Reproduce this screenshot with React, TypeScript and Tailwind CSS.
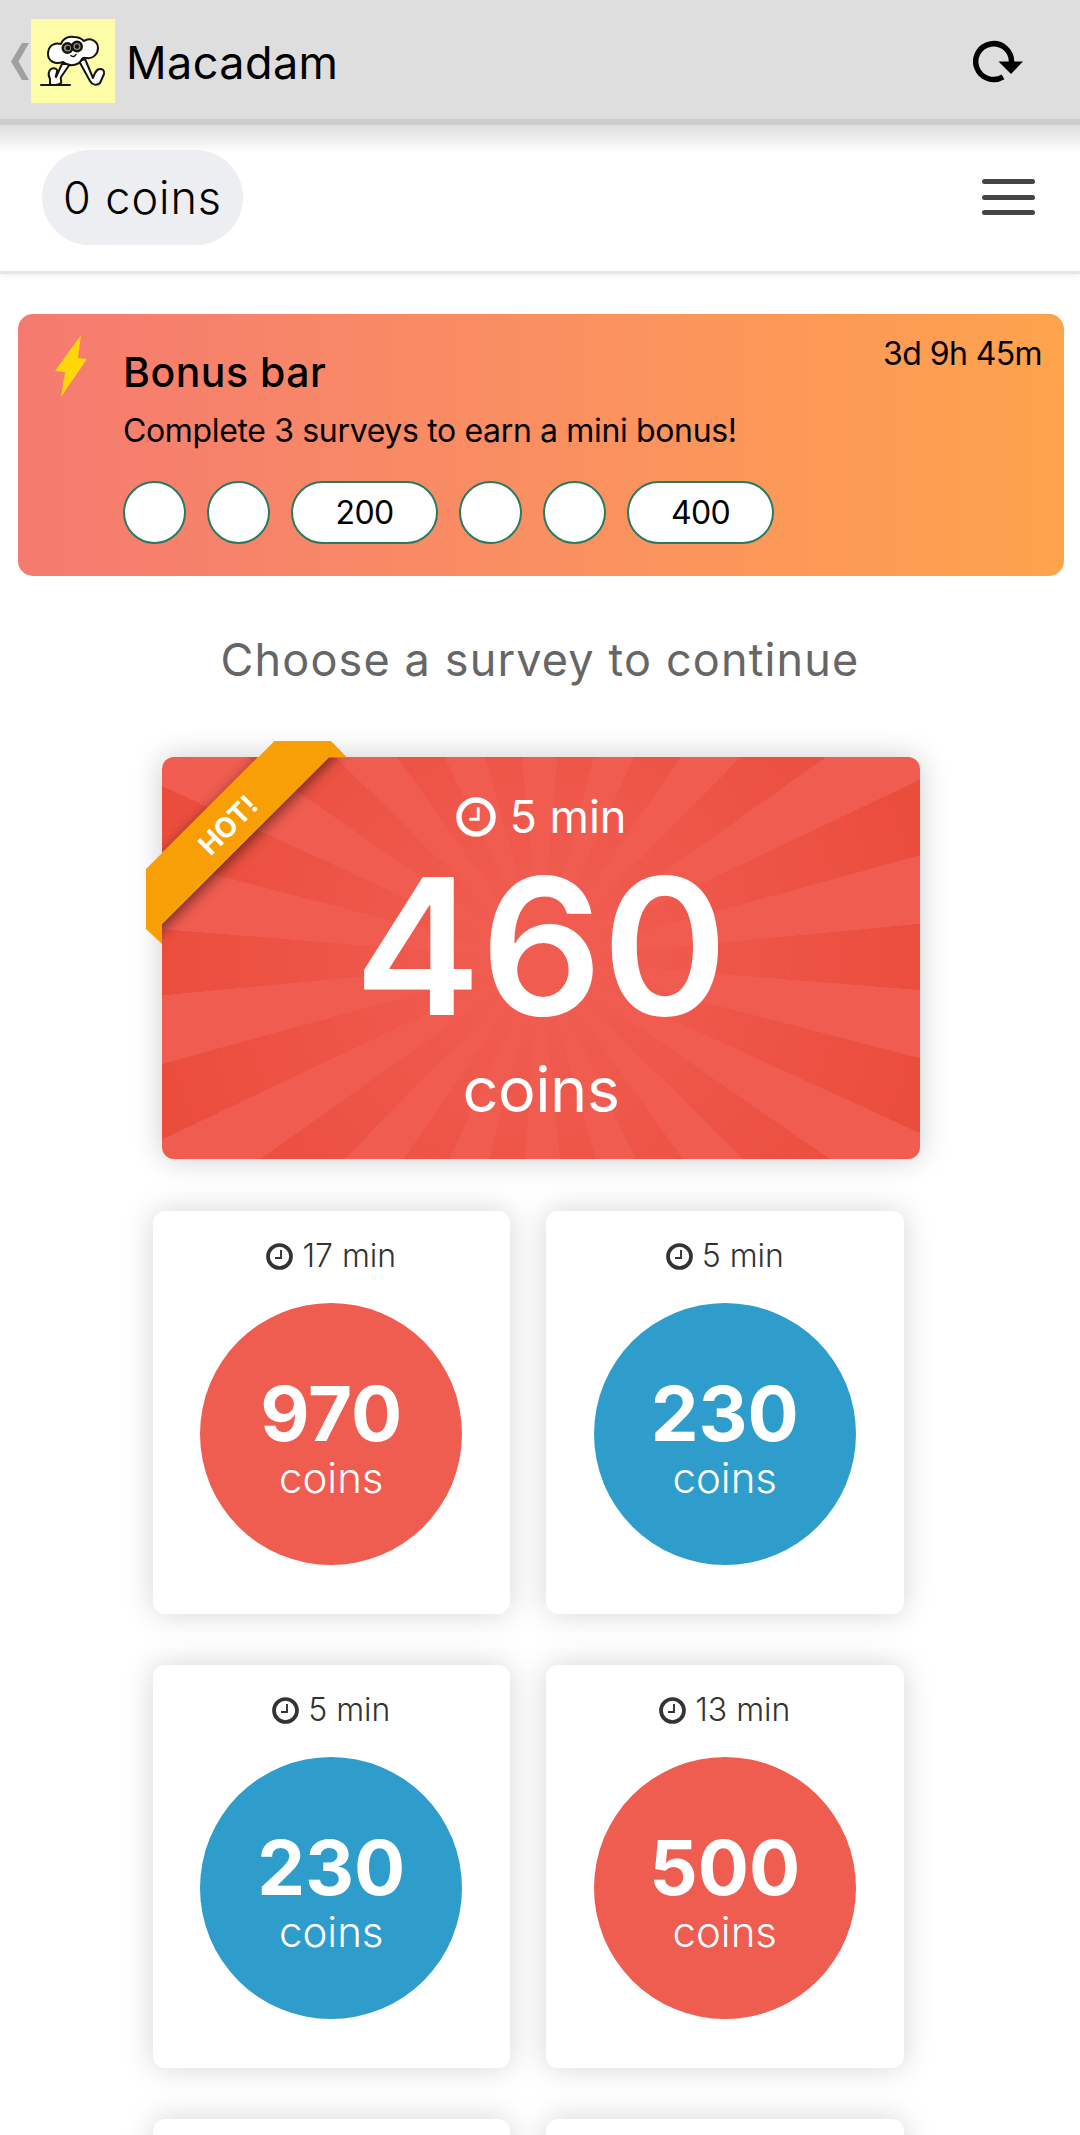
const steps = ["", "", "200", "", "", "400"];

const surveys = [
    { minutes: 17, coins: 970, color: "bg-[#ef5c50]" },
    { minutes: 5, coins: 230, color: "bg-[#2e9dcc]" },
    { minutes: 5, coins: 230, color: "bg-[#2e9dcc]" },
    { minutes: 13, coins: 500, color: "bg-[#ef5c50]" },
];

function ClockIcon({ className }: { className: string }) {
    return (
        <svg viewBox="0 0 27 27" fill="none" stroke="currentColor" className={className}>
            <circle cx="13.5" cy="13.5" r="11.5" strokeWidth="3.7" />
            <path d="M15 7v8H9" strokeWidth="1.9" />
        </svg>
    );
}

function Logo() {
    return (
        <svg viewBox="0 0 84 84" className="size-[84px]" stroke="#15150c" strokeWidth="2" strokeLinecap="round" strokeLinejoin="round">
            <rect width="84" height="84" fill="#fdfda8" stroke="none" />
            {/* legs */}
            <path d="M31 45 25 58c-1-2 2-5 1-7-2-3-7-2-8 2-1 3 0 5 1 7v5c3 2 8 1 11-1 1-2-1-4 0-6l9-13z" fill="#fff" />
            <path d="M10 66h29" fill="none" />
            <path d="M48 42 59 62c2 4 7 5 10 2l4-9c1-4-2-5-4-5-4 0-5 4-7 9L54 40z" fill="#fff" />
            {/* cloud body */}
            <path d="M30 25c2-6 8-8 13-7 5 0 8 2 10 4 6-4 14 0 14 7 0 6-5 11-11 10-2 0-4-1-5 1-3 7-13 8-19 3-8 3-15-1-15-8 0-8 6-12 13-10z" fill="#fff" />
            <circle cx="36.500" cy="29" r="4.800" fill="#888" strokeWidth="2.400" />
            <circle cx="46" cy="27.500" r="4.800" fill="#888" strokeWidth="2.400" />
            <circle cx="37" cy="29" r="1.2" fill="#15150c" />
            <circle cx="46" cy="27.500" r="1.2" fill="#15150c" />
            <path d="M40 36.500c2 2 4 1 5-1" fill="none" strokeWidth="1.5" />
        </svg>
    );
}

function SurveyCard({ minutes, coins, color }: { minutes: number; coins: number; color: string }) {
    return (
        <div className="h-[402.5px] rounded-xl bg-white pt-[28px] shadow-[0_0_30px_rgba(0,0,0,0.17)]">
            <div className="flex h-[34px] items-center justify-center gap-[9px] text-[#333]">
                <ClockIcon className="size-[27px]" />
                <span className="text-[32px] leading-none font-light">{minutes} min</span>
            </div>
            <div className={`mx-auto mt-[30px] flex size-[262px] flex-col items-center rounded-full pt-[72px] text-white ${color}`}>
                <span className="text-[76px] leading-none font-bold">{coins}</span>
                <span className="mt-[6px] text-[42px] leading-none font-light">coins</span>
            </div>
        </div>
    );
}

export default function App() {
    return (
        <div className="h-[2135px] w-[1080px] overflow-hidden bg-white font-['Inter',sans-serif] text-black">
            {/* App bar */}
            <header className="relative flex h-[125px] items-center border-b-[6px] border-[#cdcdcd] bg-[#dedede] pt-[3px] pl-[11px]">
                <svg viewBox="0 0 18 37" className="h-[37px] w-[18px]" fill="#a0a0a0">
                    <path d="M11 0h7L7.500 18.500 18 37h-7L0 18.500z" />
                </svg>
                <div className="ml-[2px]">
                    <Logo />
                </div>
                <h1 className="mt-[3px] ml-[11px] text-[45px] leading-none tracking-[0.4px]">Macadam</h1>
                <svg viewBox="0 0 50 43" className="mr-[57px] ml-auto h-[43px] w-[50px]">
                    <path d="M38.500 22A17.900 17.900 0 1 0 30 36.800" fill="none" stroke="#000" strokeWidth="5.500" />
                    <path d="M25.500 21.500H50L38 34z" />
                </svg>
                <div className="absolute top-[125px] left-0 h-[28px] w-full bg-linear-to-b from-black/13 to-transparent" />
            </header>

            {/* Balance */}
            <div className="flex h-[149px] items-center justify-between border-b-[3px] border-[#e6e6e6] pr-[45px] pb-[2px] pl-[42px] shadow-[0_2px_6px_rgba(0,0,0,0.06)]">
                <div className="flex h-[95px] w-[201px] items-center justify-center rounded-full bg-[#eceef1]">
                    <span className="text-[45px] leading-none font-light tracking-[0.9px]">0 coins</span>
                </div>
                <div className="flex flex-col gap-[10.500px]">
                    <div className="h-[5px] w-[53px] rounded-full bg-[#444]" />
                    <div className="h-[5px] w-[53px] rounded-full bg-[#444]" />
                    <div className="h-[5px] w-[53px] rounded-full bg-[#444]" />
                </div>
            </div>

            {/* Bonus bar */}
            <section className="mt-[40px] ml-[18px] flex h-[262px] w-[1046px] rounded-[15px] bg-linear-to-r from-[#f57a70] to-[#fea34c] pl-[37px]">
                <svg viewBox="0 0 32 62" className="mt-[21px] h-[62px] w-[32px]" fill="#ffd60a">
                    <path d="M26 0 0 36l10 1L6 62 32 24l-9-1z" />
                </svg>
                <div className="ml-9 flex-1 pt-[38px]">
                    <h2 className="text-[41px] leading-none font-medium tracking-[0.5px]">Bonus bar</h2>
                    <p className="mt-[22px] text-[32px] leading-none tracking-[-0.35px]">Complete 3 surveys to earn a mini bonus!</p>
                    <div className="mt-[34px] flex gap-[21px]">
                        {steps.map((step, index) => (
                            <div
                                key={index}
                                className={`flex h-[63px] items-center justify-center rounded-full border-2 border-[#2a7a62] bg-white ${step ? "w-[147px]" : "w-[63px]"}`}
                            >
                                <span className="text-[32px] leading-none tracking-[-0.7px]">{step}</span>
                            </div>
                        ))}
                    </div>
                </div>
                <span className="mt-[24px] mr-[22px] -ml-[200px] text-[32px] leading-none tracking-[-0.6px]">3d 9h 45m</span>
            </section>

            <p className="mt-[61px] text-center text-[45px] leading-none tracking-[1.15px] text-[#666]">Choose a survey to continue</p>

            {/* Hot offer */}
            <section className="relative mt-[75px] ml-[162px] h-[402px] w-[758px] rounded-xl bg-[#f05c50] shadow-[0_0_30px_rgba(0,0,0,0.2)]">
                <div className="absolute inset-0 rounded-xl bg-[repeating-conic-gradient(from_-5.4deg_at_50%_50.4%,transparent_0deg_10deg,#eb4d3d_10deg_20deg)] [mask-image:radial-gradient(circle,transparent_60px,black_390px)]" />
                <div className="relative flex flex-col items-center pt-[37px] text-white">
                    <div className="flex items-center gap-[14px]">
                        <ClockIcon className="size-[40px]" />
                        <span className="text-[45px] leading-none">5 min</span>
                    </div>
                    <span className="mt-[12px] text-[190px] leading-none font-semibold">460</span>
                    <span className="mt-[17px] text-[63px] leading-none tracking-[-0.5px]">coins</span>
                </div>
                {/* Ribbon */}
                <svg viewBox="0 0 220 220" className="absolute top-[-16px] left-[-16px] size-[220px]">
                    <defs>
                        <filter id="ribbonShadow" x="-20%" y="-20%" width="140%" height="140%">
                            <feDropShadow dx="0" dy="5" stdDeviation="7" floodColor="#000" floodOpacity="0.55" />
                        </filter>
                        <clipPath id="cardArea">
                            <path d="M16 16h204v204H16z" />
                        </clipPath>
                    </defs>
                    <g clipPath="url(#cardArea)">
                        <path d="M0 128 128 0h71L0 199z" fill="#f79f05" filter="url(#ribbonShadow)" />
                    </g>
                    <path d="M0 128 128.500 0H185l16 16.500h-18L16 183v20L0 188z" fill="#f79f05" />
                    <text x="82" y="84" transform="rotate(-45 82 84)" textAnchor="middle" dominantBaseline="central" fill="#fff" fontSize="28" fontWeight="700">
                        HOT!
                    </text>
                </svg>
            </section>

            {/* Surveys */}
            <section className="mt-[52px] ml-[152.500px] grid w-[751px] grid-cols-2 gap-x-9 gap-y-[51.500px]">
                {surveys.map((survey, index) => (
                    <SurveyCard key={index} {...survey} />
                ))}
                {/* Next row, not loaded yet */}
                <div className="h-[402.5px] rounded-xl bg-white shadow-[0_0_30px_rgba(0,0,0,0.17)]" />
                <div className="h-[402.5px] rounded-xl bg-white shadow-[0_0_30px_rgba(0,0,0,0.17)]" />
            </section>
        </div>
    );
}
